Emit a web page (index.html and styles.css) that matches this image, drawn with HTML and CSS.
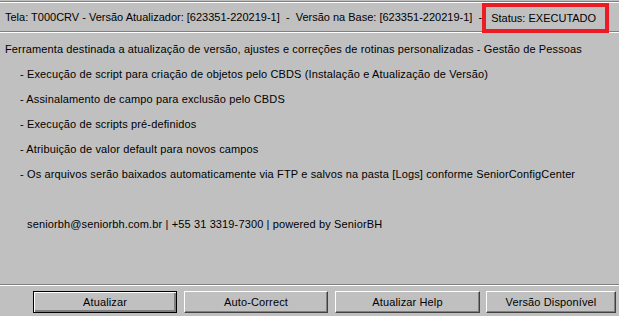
FILE: index.html
```html
<!DOCTYPE html>
<html lang="pt-BR">
<head>
    <meta charset="UTF-8">
    <title>Atualizador T000CRV</title>
    <link rel="stylesheet" href="styles.css">
</head>
<body>
    <!-- Cabeçalho -->
    <div class="header">
        <span class="header-text">Tela: T000CRV - Versão Atualizador: [623351-220219-1]&nbsp; -&nbsp; Versão na Base: [623351-220219-1]&nbsp; -</span>
        <span class="status">Status: EXECUTADO</span>
    </div>

    <!-- Descrição -->
    <div class="content">
        <div class="line">Ferramenta destinada a atualização de versão, ajustes e correções de rotinas personalizadas - Gestão de Pessoas</div>
        <div class="line item">- Execução de script para criação de objetos pelo CBDS (Instalação e Atualização de Versão)</div>
        <div class="line item">- Assinalamento de campo para exclusão pelo CBDS</div>
        <div class="line item">- Execução de scripts pré-definidos</div>
        <div class="line item">- Atribuição de valor default para novos campos</div>
        <div class="line item">- Os arquivos serão baixados automaticamente via FTP e salvos na pasta [Logs] conforme SeniorConfigCenter</div>
        <div class="line contact">seniorbh@seniorbh.com.br | +55 31 3319-7300 | powered by SeniorBH</div>
    </div>

    <!-- Botões -->
    <div class="footer">
        <button class="btn btn-default">Atualizar</button>
        <button class="btn">Auto-Correct</button>
        <button class="btn btn-wide">Atualizar Help</button>
        <button class="btn btn-last">Versão Disponível</button>
    </div>
</body>
</html>
```

FILE: styles.css
```css
* {
    margin: 0;
    padding: 0;
    box-sizing: border-box;
}

body {
    font-family: "Liberation Sans", Arial, sans-serif;
    font-size: 11px;
    color: #000;
    background: #c0c0c0;
    height: 316px;
    display: flex;
    flex-direction: column;
    overflow: hidden;
}

/* Cabeçalho */
.header {
    margin-top: 1px;
    height: 31px;
    border-top: 1px solid #808080;
    border-bottom: 1px solid #808080;
    box-shadow: inset 0 1px 0 #fff, 0 1px 0 #fff;
    display: flex;
    align-items: center;
    padding-left: 5px;
    white-space: nowrap;
}

.header-text {
    flex: none;
}

.status {
    flex: none;
    align-self: flex-start;
    margin-top: 1px;
    margin-left: auto;
    margin-right: 13px;
    margin-bottom: -4px;
    width: 127px;
    height: 30px;
    border: 4px solid #ed1c24;
    background: #c0c0c0;
    padding-left: 5px;
    display: flex;
    align-items: center;
}

/* Descrição */
.content {
    flex: 1;
    padding: 5px 0 0 5px;
    letter-spacing: 0.13px;
}

.line {
    line-height: 25px;
    white-space: nowrap;
}

.item {
    padding-left: 15px;
}

.contact {
    margin-top: 25px;
    padding-left: 22px;
}

/* Botões */
.footer {
    border-top: 1px solid #808080;
    box-shadow: inset 0 1px 0 #fff;
    height: 32px;
    padding: 6px 0 0 33px;
    display: flex;
    gap: 7px;
}

.btn {
    font-family: inherit;
    font-size: 11px;
    letter-spacing: 0.13px;
    color: #000;
    width: 144px;
    height: 22px;
    background: #c0c0c0;
    border: 1px solid;
    border-color: #fff #404040 #404040 #fff;
    box-shadow: inset -1px -1px 0 #808080;
}

.btn-default {
    border: 1px solid #000;
    box-shadow: inset 1px 1px 0 #fff, inset -2px -2px 0 #808080;
}

.btn-wide {
    width: 145px;
}

.btn-last {
    width: 130px;
    margin-left: -1px;
}
```
